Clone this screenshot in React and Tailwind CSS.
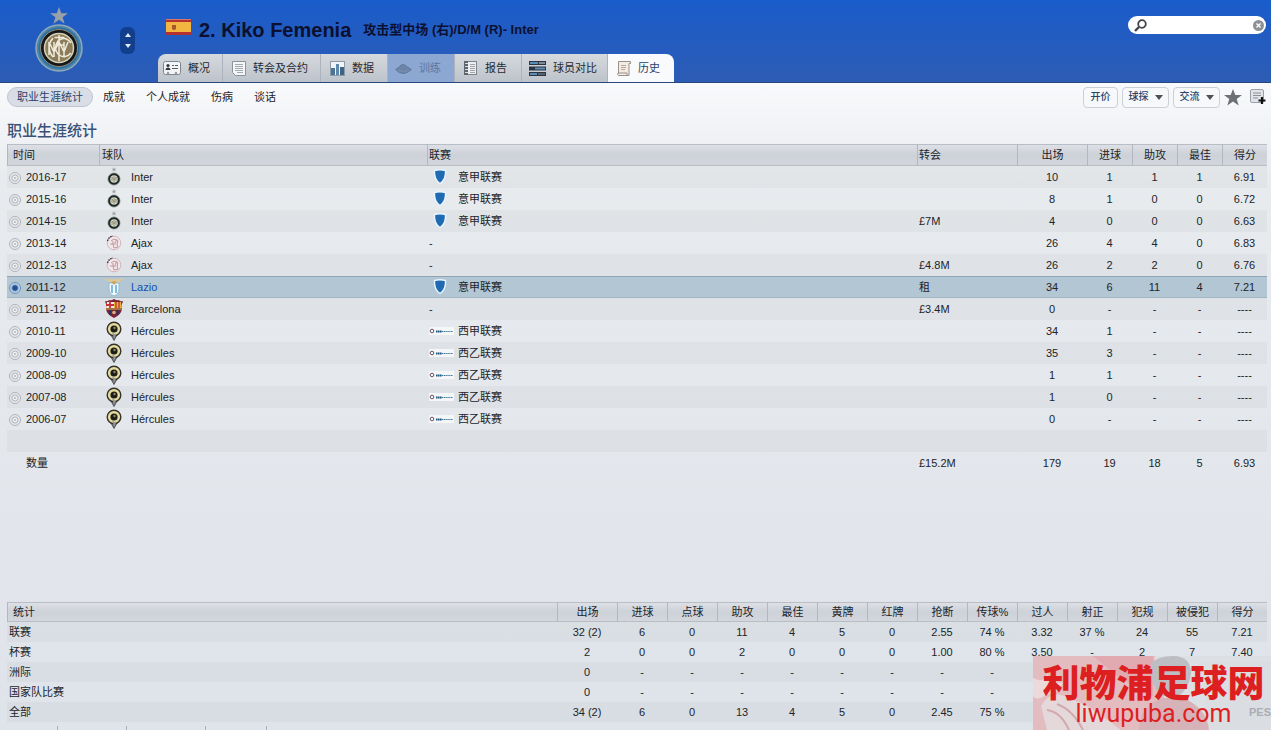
import { useState } from "react";

/* ---------------- DATA ---------------- */

const tabs = [
  { label: "概况", icon: "card", size: "w-[65px] pl-[5px]" },
  { label: "转会及合约", icon: "page", size: "w-[98px] pl-[9px]" },
  { label: "数据", icon: "chart", size: "w-[67px] pl-[9px]" },
  { label: "训练", icon: "cap", size: "w-[67px] pl-[7px]", disabled: true },
  { label: "报告", icon: "book", size: "w-[67px] pl-[9px]" },
  { label: "球员对比", icon: "compare", size: "w-[86px] pl-[7px]" },
  { label: "历史", icon: "scroll", size: "w-[66px] pl-[9px]", active: true },
];

const seasons = [
  ["2016-17", "inter", "Inter", "serie", "意甲联赛", "", "10", "1", "1", "1", "6.91"],
  ["2015-16", "inter", "Inter", "serie", "意甲联赛", "", "8", "1", "0", "0", "6.72"],
  ["2014-15", "inter", "Inter", "serie", "意甲联赛", "£7M", "4", "0", "0", "0", "6.63"],
  ["2013-14", "ajax", "Ajax", "", "-", "", "26", "4", "4", "0", "6.83"],
  ["2012-13", "ajax", "Ajax", "", "-", "£4.8M", "26", "2", "2", "0", "6.76"],
  ["2011-12", "lazio", "Lazio", "serie", "意甲联赛", "租", "34", "6", "11", "4", "7.21"],
  ["2011-12", "barca", "Barcelona", "", "-", "£3.4M", "0", "-", "-", "-", "----"],
  ["2010-11", "hercules", "Hércules", "liga", "西甲联赛", "", "34", "1", "-", "-", "----"],
  ["2009-10", "hercules", "Hércules", "liga", "西乙联赛", "", "35", "3", "-", "-", "----"],
  ["2008-09", "hercules", "Hércules", "liga", "西乙联赛", "", "1", "1", "-", "-", "----"],
  ["2007-08", "hercules", "Hércules", "liga", "西乙联赛", "", "1", "0", "-", "-", "----"],
  ["2006-07", "hercules", "Hércules", "liga", "西乙联赛", "", "0", "-", "-", "-", "----"],
];

const statColumns = [
  "出场", "进球", "点球", "助攻", "最佳", "黄牌", "红牌",
  "抢断", "传球%", "过人", "射正", "犯规", "被侵犯", "得分",
];

const stats = [
  ["联赛", "32 (2)", "6", "0", "11", "4", "5", "0", "2.55", "74 %", "3.32", "37 %", "24", "55", "7.21"],
  ["杯赛", "2", "0", "0", "2", "0", "0", "0", "1.00", "80 %", "3.50", "-", "2", "7", "7.40"],
  ["洲际", "0", "-", "-", "-", "-", "-", "-", "-", "-", "", "", "", "", ""],
  ["国家队比赛", "0", "-", "-", "-", "-", "-", "-", "-", "-", "", "", "", "", ""],
  ["全部", "34 (2)", "6", "0", "13", "4", "5", "0", "2.45", "75 %", "", "", "", "", ""],
];

/* ---------------- ICONS ---------------- */

function TabIcon({ name }) {
  if (name === "card")
    return (
      <svg width="18" height="15" viewBox="0 0 18 15" className="shrink-0">
        <rect x="0.5" y="0.5" width="17" height="13" rx="2" fill="#f3f4f6" stroke="#7d858f" />
        <circle cx="5" cy="4.5" r="1.6" fill="#33373d" />
        <path d="M2.5 9c0-3.5 5-3.5 5 0z" fill="#33373d" />
        <path d="M9 4.5h2M12 4.5h3M9 7.5h6" stroke="#555b64" />
        <circle cx="5" cy="12" r="1.3" fill="#9aa0a8" />
        <circle cx="13" cy="12" r="1.3" fill="#9aa0a8" />
      </svg>
    );
  if (name === "page")
    return (
      <svg width="14" height="15" viewBox="0 0 14 15" className="shrink-0">
        <path d="M0.5 0.5h13v14h-10l-3-3z" fill="#f5f6f7" stroke="#8c939c" />
        <path d="M3 3.5h8M3 5.5h8M3 7.5h8M3 9.5h8M5 11.5h6" stroke="#a3a9b1" />
      </svg>
    );
  if (name === "chart")
    return (
      <svg width="15" height="15" viewBox="0 0 15 15" className="shrink-0">
        <rect x="0.5" y="0.5" width="14" height="14" fill="#f1f4f7" stroke="#8e9aa8" />
        <rect x="1" y="7" width="4" height="7" fill="#4c7295" />
        <rect x="6" y="3" width="3" height="11" fill="#5f88aa" />
        <rect x="10" y="6" width="4" height="8" fill="#3d6488" />
      </svg>
    );
  if (name === "cap")
    return (
      <svg width="17" height="11" viewBox="0 0 17 11" className="shrink-0">
        <path d="M0.5 6.5Q3 5 4 4Q8 -1 12.5 4Q14 5 16.5 6.5Q12 10.5 8.5 10.5Q4 10.5 0.5 6.5z" fill="#6e84a6" stroke="#627aa0" />
        <path d="M3 7.500q5.500 1.500 11 0" fill="none" stroke="#7b90b0" />
      </svg>
    );
  if (name === "book")
    return (
      <svg width="14" height="15" viewBox="0 0 14 15" className="shrink-0">
        <rect x="0.5" y="0.5" width="12" height="13" fill="#eceeef" stroke="#7e848b" />
        <rect x="0" y="0" width="4" height="14" fill="#5e646b" />
        <path d="M1 2.5h3M1 5.5h3M1 8.5h3M1 11.5h3" stroke="#d9dcdf" />
        <path d="M6 3.5h5M6 5.5h5M6 7.5h5M6 9.5h5M6 11.5h5" stroke="#9fa4aa" />
      </svg>
    );
  if (name === "compare")
    return (
      <svg width="17" height="15" viewBox="0 0 17 15" className="shrink-0">
        <rect width="17" height="4" fill="#2c3540" />
        <rect y="5.5" width="17" height="4" fill="#2c3540" />
        <rect y="11" width="17" height="4" fill="#2c3540" />
        <rect x="1" y="1" width="8" height="2" fill="#5a8cb4" />
        <rect x="6" y="6.5" width="10" height="2" fill="#5a8cb4" />
        <rect x="1" y="12" width="7" height="2" fill="#5a8cb4" />
        <rect x="10" y="1" width="6" height="2" fill="#7d8a95" />
        <rect x="9" y="12" width="7" height="2" fill="#59636d" />
      </svg>
    );
  return (
    <svg width="14" height="15" viewBox="0 0 14 15" className="shrink-0">
      <path d="M1.5 0.5h12v2h-1.500v12H1.500q-1.500-1-0.500-2.500h0.500z" fill="#f1ebe4" stroke="#9a9089" />
      <path d="M4 4.5h5M4 6.500h5M4 8.500h4" stroke="#b8a79d" />
      <path d="M1 12h9v2.500" fill="none" stroke="#9a9089" />
    </svg>
  );
}

function InterCrest() {
  return (
    <svg width="50" height="68" viewBox="0 0 50 68">
      <path d="M25 0l2.300 6.300h6.700l-5.400 4 2 6.500-5.600-4-5.600 4 2-6.500-5.400-4h6.700z" fill="#98a0a8" />
      <circle cx="25" cy="41" r="23" fill="#4a84a8" stroke="#8fa9b8" strokeWidth="1.500" />
      <circle cx="25" cy="41" r="20.500" fill="#2f6f9f" />
      <circle cx="25" cy="41" r="18.500" fill="#14181a" stroke="#8d8a72" />
      <circle cx="25" cy="41" r="14.500" fill="#8b7d5c" stroke="#d9d1b5" strokeWidth="1.500" />
      <path
        d="M15 48V35l5 10 5-10 5 10 4-10M25 28v26M20.500 30.500h10M25 38h5M20 35v15M30 35v15M37 36q-6-8-13-2-5 7 0 13 7 6 13-1M19 31q-8 9 0 19"
        fill="none"
        stroke="#f0ead7"
        strokeWidth="1.500"
      />
    </svg>
  );
}

function ClubBadge({ club }) {
  if (club === "inter")
    return (
      <svg width="20" height="20" viewBox="0 0 20 20" className="shrink-0">
        <path d="M10 0l.7 1.700h1.800l-1.400 1.100.5 1.700-1.600-1-1.600 1 .5-1.700-1.400-1.100h1.800z" fill="#a0a3a5" />
        <circle cx="10" cy="12" r="6" fill="#b8b9a4" stroke="#8d9696" strokeWidth="1" />
        <circle cx="10" cy="12" r="4.800" fill="#d6d6c4" stroke="#1c2826" strokeWidth="2" />
        <path d="M8 14v-4l2 3 2-3v4M10 9v6" fill="none" stroke="#8c8e7c" strokeWidth="0.900" />
      </svg>
    );
  if (club === "ajax")
    return (
      <svg width="20" height="20" viewBox="0 0 20 20" className="shrink-0">
        <circle cx="10" cy="10" r="6.800" fill="#f0e9ec" stroke="#d3b4ba" />
        <path d="M3.500 8q1-4 5.500-5" fill="none" stroke="#3a3336" strokeWidth="1.300" strokeDasharray="1.500 1" />
        <path d="M7 8l3-2 4 2-1 3 1 3-4 1M6 11l3 0 1 4M9 8v3h3M13 6l-2 4" fill="none" stroke="#c4929d" />
      </svg>
    );
  if (club === "lazio")
    return (
      <svg width="20" height="20" viewBox="0 0 20 20" className="shrink-0">
        <path d="M0 1q6 2 10 1 4 1 10-1-4 5-9 5-7 0-11-5z" fill="#dfc796" />
        <path d="M5 6h10v6q0 5-5 7-5-2-5-7z" fill="#f3f8fb" stroke="#8dbbd6" />
        <path d="M8 8v8M12 8v8" stroke="#65aed8" strokeWidth="1.600" />
        <path d="M7 5l3-1 3 1-3 3z" fill="#c6a667" />
      </svg>
    );
  if (club === "barca")
    return (
      <svg width="20" height="20" viewBox="0 0 20 20" className="shrink-0">
        <path d="M1 2q3 1 4-1 2 1 5-1 3 2 5 1 1 2 4 1-2 4-1 8-1 6-8 9-7-3-8-9 1-4-1-8z" fill="#7b2035" />
        <path d="M3 3h7v6H2z" fill="#f0ebe3" />
        <path d="M6 2v7M2 6h8" stroke="#c92f3a" strokeWidth="1.800" />
        <path d="M10 3h7l1 6h-8z" fill="#eab23c" />
        <path d="M12 3v6M15 3v6" stroke="#b5372f" strokeWidth="1.300" />
        <path d="M2 9h16v2H2z" fill="#a5713c" />
        <path d="M6 11v5M13.500 11v5" stroke="#20376c" strokeWidth="2" />
        <circle cx="10" cy="13.500" r="1.800" fill="#d8b37a" />
      </svg>
    );
  return (
    <svg width="20" height="20" viewBox="0 0 20 20" className="shrink-0">
      <path d="M7 14h6l-3 5.500z" fill="#7f8187" stroke="#55575b" />
      <circle cx="10" cy="8" r="6.800" fill="#e6dc9f" stroke="#34332a" strokeWidth="1.400" />
      <circle cx="10" cy="8" r="3.600" fill="#1d1d1b" />
      <circle cx="10.500" cy="7" r="1.200" fill="#8f8656" />
      <path d="M8 11l4 3-2 3z" fill="#98989a" />
    </svg>
  );
}

function LeagueBadge({ league }) {
  if (league === "serie")
    return (
      <svg width="25" height="18" viewBox="0 0 25 18" className="shrink-0">
        <path d="M5.500 2.500Q11 1 16.500 2.500C17 9 15.500 12.500 11 15.500C6.500 12.500 5 9 5.500 2.500z" fill="#1f6ab0" stroke="#e6f5ff" strokeWidth="1.400" />
      </svg>
    );
  return (
    <svg width="25" height="8" viewBox="0 0 25 8" className="shrink-0">
      <rect width="25" height="8" fill="#f4f6f8" />
      <circle cx="3" cy="4" r="1.800" fill="none" stroke="#6e5264" />
      <path d="M7 4.500h6" stroke="#1b5580" strokeWidth="1.800" strokeDasharray="1.500 .4" />
      <path d="M13 4.500h11" stroke="#3a7a9c" strokeWidth="1.200" strokeDasharray="1.300 .5" />
    </svg>
  );
}

function Watermark() {
  return (
    <div className="absolute right-0 bottom-0 w-[238px] h-[74px] text-center text-[#de1f22]">
      <svg className="absolute inset-0" width="238" height="74" viewBox="0 0 238 74">
        <rect width="238" height="74" fill="#dcdfe4" />
        <path d="M0 0h122q-6 30 16 48l30 26H0z" fill="#e3bcc0" />
        <path d="M60 0h60v40L84 20z" fill="#e0aab0" />
        <path d="M0 22q12 6 14-4 6 12 16 8-4 12-16 12Q4 46 0 40z" fill="#ecd9dc" />
        <path d="M8 50q10-18 28-8l22 10 30 22H14z" fill="#e5d8da" />
        <path d="M14 54q14 2 22 20M24 48q16 6 26 26" fill="none" stroke="#d3a9ae" strokeWidth="2" />
        <path d="M118 8q6-8 22-8 18 0 18 18-2 14-12 22h-18q-12-14-10-32z" fill="#bcbec4" />
        <path d="M106 74q0-24 24-32h20q24 10 26 32z" fill="#d6b3b8" />
        <path d="M166 6h72v68h-60z" fill="#dadde2" />
      </svg>
      <div className="relative flex flex-col items-center pl-[3px]">
        <span className="mt-1 h-[42px] leading-[42px] text-[37px] font-black font-['Noto_Sans_CJK_SC',sans-serif] whitespace-nowrap">
          利物浦足球网
        </span>
        <span className="h-6 leading-6 text-[25px] font-['Roboto',sans-serif]">liwupuba.com</span>
      </div>
      <span className="absolute right-0 bottom-3 leading-3 text-[11px] font-bold text-[#a9adb4]">PES</span>
    </div>
  );
}

/* ---------------- PARTS ---------------- */

const headCell =
  "p-0 font-normal bg-linear-to-b from-[#dde0e5] via-[#cdd1d8] to-[#d3d7dd] border-y border-l border-y-[#b9bec6] border-l-[#b2b7c0]";
const toolButton =
  "flex items-center justify-center h-[21px] rounded-sm border border-[#cbd0d7] bg-[#f6f8fa] text-[10px] font-medium text-[#29436b]";

function Caret() {
  return (
    <svg width="8" height="5" viewBox="0 0 8 5">
      <path d="M0 0h8L4 5z" fill="#4c5158" />
    </svg>
  );
}

function Header() {
  return (
    <header className="flex h-[83px] bg-linear-to-b from-[#195ccb] to-[#2c5cb4] border-b border-[#27477f]">
      <div className="w-[158px] shrink-0 flex pt-[7px] pl-[34px]">
        <InterCrest />
        <div className="ml-9 mt-5 w-[15px] h-[27px] rounded-md bg-[#123f8d] flex flex-col items-center justify-between py-1">
          <button aria-label="上一个" className="h-2 flex items-center">
            <svg width="6" height="4" viewBox="0 0 6 4"><path d="M0 4h6L3 0z" fill="#e3ecf8" /></svg>
          </button>
          <button aria-label="下一个" className="h-2 flex items-center">
            <svg width="6" height="4" viewBox="0 0 6 4"><path d="M0 0h6L3 4z" fill="#e3ecf8" /></svg>
          </button>
        </div>
      </div>

      <div className="flex-1 flex flex-col justify-between">
        {/* Name */}
        <div className="flex items-center h-6 mt-[18px] pl-2 text-[#0c1030] whitespace-nowrap">
          <svg width="25" height="16" viewBox="0 0 25 16" className="mb-1.5">
            <rect width="25" height="16" rx="1" fill="#b5312f" />
            <rect y="3" width="25" height="10" fill="#f2b640" />
            <path d="M6 6h4v4q-2 2-4 0z" fill="#a8562c" />
            <rect width="25" height="1" fill="#d9776c" />
          </svg>
          <h1 className="ml-2 text-xl leading-6 font-bold">2. Kiko Femenia</h1>
          <p className="ml-3 text-[13px] font-bold">攻击型中场 (右)/D/M (R)- Inter</p>
        </div>

        {/* Tabs */}
        <nav className="flex h-7">
          {tabs.map((tab) => (
            <button
              key={tab.label}
              disabled={tab.disabled}
              className={`${tab.size} flex items-center gap-[7px] whitespace-nowrap first:rounded-tl-lg last:rounded-tr-lg border-r last:border-r-0 border-[#adb3bc] ${
                tab.active
                  ? "bg-[#f9fafc] text-[#29436b]"
                  : tab.disabled
                  ? "bg-[#8ca7d2] text-[#5d76a0]"
                  : "bg-linear-to-b from-[#d6dade] to-[#bdc3cb] text-[#262a30]"
              }`}
            >
              <TabIcon name={tab.icon} />
              {tab.label}
            </button>
          ))}
        </nav>
      </div>

      {/* Search */}
      <label className="flex items-center self-start w-[138px] h-[18px] mt-4 mr-[5px] px-1.5 rounded-full bg-white">
        <svg width="13" height="13" viewBox="0 0 13 13" className="shrink-0">
          <circle cx="8" cy="5" r="3.800" fill="none" stroke="#42464c" strokeWidth="1.800" />
          <path d="M5 8l-4 4" stroke="#42464c" strokeWidth="2.400" />
        </svg>
        <input type="text" aria-label="搜索" className="flex-1 min-w-0 h-full px-1 outline-none" />
        <svg width="11" height="11" viewBox="0 0 11 11" className="shrink-0 -mr-1">
          <circle cx="5.500" cy="5.500" r="5.500" fill="#8e9196" />
          <path d="M3.500 3.500l4 4M7.500 3.500l-4 4" stroke="#fff" strokeWidth="1.400" />
        </svg>
      </label>
    </header>
  );
}

function SubNav() {
  return (
    <div className="flex items-center h-7 pl-[7px] pr-1 text-[#1e2227]">
      <nav className="flex items-center gap-[21px]">
        <a href="#career" className="h-5 leading-[18px] px-[9px] -mr-[11px] rounded-full border border-[#bfc4d0] bg-[#d9dde5] text-[#29436b]">
          职业生涯统计
        </a>
        <a href="#honours">成就</a>
        <a href="#personal">个人成就</a>
        <a href="#injuries">伤病</a>
        <a href="#talks">谈话</a>
      </nav>
      <div className="ml-auto flex items-center gap-1">
        <button className={`${toolButton} w-[35px]`}>开价</button>
        <button className={`${toolButton} w-[47px] gap-1.5`}>球探 <Caret /></button>
        <button className={`${toolButton} w-[47px] gap-1.5`}>交流 <Caret /></button>
        <button aria-label="收藏">
          <svg width="18" height="17" viewBox="0 0 18 17">
            <path d="M9 0l2.300 6H18l-5.300 4 2 6.500L9 12.600l-5.700 3.900 2-6.500L0 6h6.700z" fill="#6d7075" />
          </svg>
        </button>
        <button aria-label="添加记录" className="ml-1">
          <svg width="17" height="16" viewBox="0 0 17 16">
            <rect x="0.500" y="0.500" width="13" height="13" rx="1.500" fill="#e1e4e8" stroke="#9ba0a7" />
            <path d="M3 4h8M3 6.500h8M3 9h5" stroke="#8c9198" />
            <path d="M12 8v7M8.500 11.500h7" stroke="#111" strokeWidth="2.200" />
          </svg>
        </button>
      </div>
    </div>
  );
}

function CareerTable() {
  const [selected, setSelected] = useState(5);

  return (
    <table className="w-full table-fixed border-separate border-spacing-0">
      <colgroup>
        <col className="w-[92px]" />
        <col className="w-[328px]" />
        <col />
        <col className="w-[100px]" />
        <col className="w-[70px]" />
        <col className="w-[45px]" />
        <col className="w-[45px]" />
        <col className="w-[45px]" />
        <col className="w-[45px]" />
      </colgroup>
      <thead>
        <tr className="h-[22px]">
          <th className={`${headCell} text-left pl-[5px]`}>时间</th>
          <th className={`${headCell} text-left pl-0.5`}>球队</th>
          <th className={`${headCell} text-left pl-px`}>联赛</th>
          <th className={`${headCell} text-left pl-px`}>转会</th>
          {["出场", "进球", "助攻", "最佳", "得分"].map((name) => (
            <th key={name} className={headCell}>{name}</th>
          ))}
        </tr>
      </thead>
      <tbody>
        {seasons.map(([year, club, team, league, comp, fee, ...nums], i) => (
          <tr
            key={i}
            className={`h-[22px] ${
              selected === i
                ? "bg-[#b2c6d4] shadow-[inset_0_1px_0_#8fa5b5,inset_0_-1px_0_#a0b4c2]"
                : "odd:bg-slate-700/4"
            }`}
          >
            <td className="p-0">
              <label className="flex items-center gap-[5px] pl-0.5">
                <input
                  type="radio"
                  name="season"
                  checked={selected === i}
                  onChange={() => setSelected(i)}
                  className="appearance-none w-3 h-3 mt-px rounded-full border border-[#b0b4ba] bg-[radial-gradient(circle,#c3c7cc_1px,#eceef1_1px,#eceef1_2px,#b0b4ba_3px,#e9ebee_4px)] checked:border-[#6f8fb5] checked:bg-[radial-gradient(circle,#1f4f94_2px,#b9d0e6_4px)]"
                />
                {year}
              </label>
            </td>
            <td className="p-0">
              <div className="flex items-center gap-[7px] pl-[5px]">
                <ClubBadge club={club} />
                <span className={selected === i ? "text-[#1550ae]" : ""}>{team}</span>
              </div>
            </td>
            <td className="p-0">
              <div className="flex items-center gap-1 pl-0.5">
                {league && <LeagueBadge league={league} />}
                {comp}
              </div>
            </td>
            <td className="p-0 pl-0.5">{fee}</td>
            {nums.map((n, k) => (
              <td key={k} className="p-0 text-center">{n}</td>
            ))}
          </tr>
        ))}
        <tr className="h-[22px] bg-slate-700/4">
          <td colSpan={9} />
        </tr>
      </tbody>
      <tfoot>
        <tr className="h-[22px]">
          <td className="p-0 pl-[19px]" colSpan={3}>数量</td>
          <td className="p-0 pl-0.5">£15.2M</td>
          {["179", "19", "18", "5", "6.93"].map((n) => (
            <td key={n} className="p-0 text-center">{n}</td>
          ))}
        </tr>
      </tfoot>
    </table>
  );
}

function StatsTable() {
  return (
    <table className="w-full table-fixed border-separate border-spacing-0">
      <thead>
        <tr className="h-5">
          <th className={`${headCell} text-left pl-[5px]`}>统计</th>
          {statColumns.map((name, i) => (
            <th key={name} className={`${headCell} ${i === 0 ? "w-[60px]" : "w-[50px]"}`}>
              {name}
            </th>
          ))}
        </tr>
      </thead>
      <tbody>
        {stats.map(([name, ...nums]) => (
          <tr key={name} className="h-5 odd:bg-slate-700/4">
            <td className="p-0 pl-0.5">{name}</td>
            {nums.map((n, k) => (
              <td key={k} className="p-0 text-center">{n}</td>
            ))}
          </tr>
        ))}
      </tbody>
    </table>
  );
}

export default function App() {
  return (
    <div className="relative h-screen overflow-hidden bg-linear-to-b from-[#fafbfd] from-10% via-[#e8ebee] via-25% to-[#dfe3ea] text-[11px] leading-4 text-[#202429] font-['Liberation_Sans','Noto_Sans_CJK_SC',sans-serif]">
      <Header />
      <SubNav />
      <main className="pl-[7px] pr-1">
        <h2 className="mt-2 h-[25px] leading-6 text-[15px] font-medium text-[#3b5177]">
          职业生涯统计
        </h2>
        <CareerTable />
        <div className="h-32" />
        <StatsTable />
        {/* Bottom strip, runs on below the window */}
        <div className="flex mt-1 h-5">
          <span className="w-[51px] border-r border-[#aeb4be]" />
          <span className="w-[69px] border-r border-[#aeb4be]" />
          <span className="w-[79px] border-r border-[#aeb4be]" />
          <span className="w-[61px] border-r border-[#aeb4be]" />
        </div>
      </main>
      <Watermark />
    </div>
  );
}
